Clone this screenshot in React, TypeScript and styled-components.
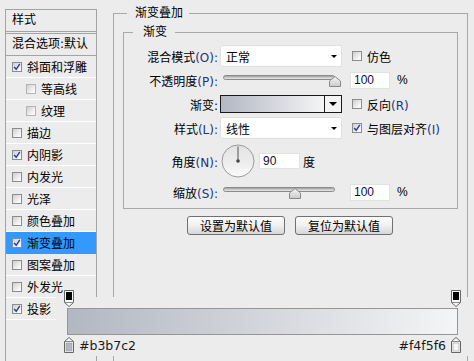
import React from 'react';
import styled, { createGlobalStyle } from 'styled-components';

const GlobalStyle = createGlobalStyle`
  html, body {
    margin: 0;
    padding: 0;
    background: #ececec;
  }
  body {
    font-family: "DejaVu Sans", "Noto Sans CJK SC", sans-serif;
    font-size: 12px;
    color: #000;
  }
`;

const Window = styled.div`
  position: relative;
  width: 474px;
  height: 361px;
  overflow: hidden;
  display: flex;
  align-items: flex-start;
  background: #ececec;
`;

/* ---------- left style list ---------- */

const StyleList = styled.div`
  box-sizing: border-box;
  flex-shrink: 0;
  width: 92px;
  height: 352px;
  margin: 9px 0 0 5px;
  border: 1px solid #a3a3a3;
  border-bottom: none;
`;

const ListHead = styled.div`
  height: 21px;
  line-height: 21px;
  padding-left: 6px;
  border-bottom: 3px double #a3a3a3;
`;

const ListBlend = styled.div`
  height: 21px;
  line-height: 21px;
  padding-left: 6px;
  white-space: nowrap;
  border-bottom: 1px solid #a3a3a3;
`;

const ListItem = styled.div<{ $indent?: boolean; $active?: boolean }>`
  display: flex;
  align-items: center;
  gap: 5px;
  height: 21px;
  padding-left: ${p => (p.$indent ? 20 : 6)}px;
  white-space: nowrap;
  background: ${p => (p.$active ? '#3399ff' : 'transparent')};
  border-bottom: 1px solid ${p => (p.$active ? '#3399ff' : '#fff')};
`;

const Box = styled.span<{ $dim?: boolean }>`
  box-sizing: border-box;
  flex-shrink: 0;
  display: inline-flex;
  width: 10px;
  height: 10px;
  border: 1px solid ${p => (p.$dim ? '#b4b4b4' : '#8c8c8c')};
  background: linear-gradient(135deg, #cfcfcf, #f4f4f4 70%, #fff);
`;

const Check: React.FC<{ on?: boolean; dim?: boolean }> = ({ on, dim }) => (
  <Box $dim={dim}>
    {on && (
      <svg width="8" height="8" viewBox="0 0 8 8">
        <path d="M1.2 4 L3.2 6.3 L6.8 0.8" fill="none" stroke="#2a3ea8" strokeWidth="1.5" />
      </svg>
    )}
  </Box>
);

/* ---------- right settings ---------- */

const Group = styled.fieldset`
  box-sizing: border-box;
  flex-shrink: 0;
  min-width: 0;
  width: 355px;
  height: 420px;
  margin: 6px 0 0 16px;
  padding: 5px 9px 0 9px;
  border: 1px solid #a8a8a8;
`;

const GroupTitle = styled.legend<{ $inset: number; $pad: string }>`
  margin-left: ${p => p.$inset}px;
  padding: ${p => p.$pad};
  font-size: 12px;
  line-height: 14px;
`;

const Inner = styled.fieldset`
  box-sizing: border-box;
  min-width: 0;
  width: 335px;
  margin: 0;
  padding: 5px 0 6px 0;
  border: 1px solid #a8a8a8;
`;

const Row = styled.div<{ $h: number }>`
  display: flex;
  align-items: center;
  height: ${p => p.$h}px;
`;

const Label = styled.div`
  flex-shrink: 0;
  width: 94px;
  text-align: right;
  white-space: nowrap;
`;

const Key = styled.span`
  color: #22337f;
`;

const Control = styled.div`
  flex-shrink: 0;
  display: flex;
  align-items: center;
  width: 122px;
  margin-left: 2px;
`;

const Side = styled.div`
  display: flex;
  align-items: center;
  margin-left: 8px;
  white-space: nowrap;
`;

const CheckLabel = styled.label`
  display: flex;
  align-items: center;
  gap: 5px;
  margin-left: 2px;
`;

const Select = styled.div`
  box-sizing: border-box;
  display: flex;
  align-items: center;
  justify-content: space-between;
  width: 122px;
  height: 22px;
  padding: 0 4px 0 5px;
  background: #fff;
  border: 1px solid #e0e0e0;
  border-radius: 2px;
`;

const Caret = styled.span<{ $w: number }>`
  width: 0;
  height: 0;
  border-left: ${p => p.$w / 2}px solid transparent;
  border-right: ${p => p.$w / 2}px solid transparent;
  border-top: ${p => p.$w / 2}px solid #000;
`;

const Swatch = styled.div`
  box-sizing: border-box;
  display: flex;
  width: 122px;
  height: 18px;
  border: 1px solid #1a1a1a;
`;

const SwatchFill = styled.div`
  flex: 1;
  background: linear-gradient(to right, #b3b7c2, #f4f5f6);
`;

const SwatchDrop = styled.div`
  display: flex;
  align-items: center;
  justify-content: center;
  width: 16px;
  border-left: 1px solid #1a1a1a;
  background: #f4f4f4;
`;

const Slider = styled.div`
  position: relative;
  width: 122px;
  height: 16px;
`;

const Track = styled.div`
  position: absolute;
  left: 3px;
  top: 3px;
  box-sizing: border-box;
  width: 112px;
  height: 5px;
  border-radius: 3px;
  border: 1px solid #8a8a8a;
  background: linear-gradient(#9c9c9c, #d2d2d2 60%, #e6e6e6);
`;

const ThumbWrap = styled.div`
  position: absolute;
  top: 4px;
  width: 12px;
  height: 11px;
`;

const Thumb: React.FC<{ ratio: number }> = ({ ratio }) => (
  <ThumbWrap style={{ left: 3 + ratio * 112 - 6 }}>
    <svg width="12" height="11" viewBox="0 0 12 11">
      <defs>
        <linearGradient id="th" x1="0" y1="0" x2="0" y2="1">
          <stop offset="0" stopColor="#f6f6f6" />
          <stop offset="1" stopColor="#cacaca" />
        </linearGradient>
      </defs>
      <polygon points="6,0.5 11.5,5 11.5,10.5 0.5,10.5 0.5,5" fill="url(#th)" stroke="#8a8a8a" />
    </svg>
  </ThumbWrap>
);

const NumberBox = styled.div<{ $w: number; $h: number }>`
  box-sizing: border-box;
  width: ${p => p.$w}px;
  height: ${p => p.$h}px;
  padding-left: 3px;
  line-height: ${p => p.$h - 2}px;
  background: #fff;
  border: 1px solid #e2e2e2;
  font-family: "Liberation Sans", sans-serif;
  font-size: 12px;
  color: #101030;
`;

const Unit = styled.span<{ $gap: number }>`
  margin-left: ${p => p.$gap}px;
  font-family: "Liberation Sans", "Noto Sans CJK SC", sans-serif;
`;

const DialWrap = styled.div`
  display: flex;
  margin-left: 1px;
`;

const Dial: React.FC = () => (
  <DialWrap>
    <svg width="34" height="34" viewBox="0 0 34 34">
      <defs>
        <linearGradient id="dl" x1="0" y1="0" x2="0" y2="1">
          <stop offset="0" stopColor="#e2e2e2" />
          <stop offset="0.55" stopColor="#ededed" />
          <stop offset="1" stopColor="#fbfbfb" />
        </linearGradient>
      </defs>
      <circle cx="17" cy="17" r="16" fill="url(#dl)" stroke="#9a9a9a" />
      <line x1="17" y1="17" x2="17" y2="2.5" stroke="#555" strokeWidth="1" />
      <circle cx="17" cy="17" r="1.8" fill="#444" />
    </svg>
  </DialWrap>
);

const Buttons = styled.div`
  display: flex;
  gap: 10px;
  margin: 7px 0 0 64px;
`;

const Button = styled.button`
  box-sizing: border-box;
  width: 98px;
  height: 19px;
  padding: 0;
  border: 1px solid #707070;
  border-radius: 3px;
  background: linear-gradient(#fdfdfd, #f0f0f0 50%, #d6d6d6);
  font: 12px/17px "Noto Sans CJK SC", sans-serif;
  color: #000;
`;

/* ---------- gradient strip on top ---------- */

const Editor = styled.div`
  position: absolute;
  left: 56px;
  top: 297px;
  right: 0;
  height: 59px;
  background: #ececec;
`;

const Bar = styled.div`
  box-sizing: border-box;
  width: 391px;
  height: 27px;
  margin: 11px 0 0 11px;
  border: 1px solid #969696;
  background: linear-gradient(to right, #b3b7c2, #f4f5f6);
`;

const StopRow = styled.div`
  display: flex;
  align-items: center;
  justify-content: space-between;
  width: 397px;
  height: 16px;
  margin: 2px 0 0 8px;
`;

const StopSide = styled.div`
  display: flex;
  align-items: center;
  gap: 5px;
`;

const Hex = styled.span`
  font-family: "DejaVu Sans", sans-serif;
  font-size: 12.5px;
  color: #1a1a1a;
`;

const OpacityStop = styled.div<{ $x: number }>`
  position: absolute;
  top: -7px;
  left: ${p => p.$x}px;
  width: 10px;
  height: 17px;
`;

const TopStop: React.FC<{ x: number }> = ({ x }) => (
  <OpacityStop $x={x}>
    <svg width="10" height="17" viewBox="0 0 10 17">
      <polygon points="0.5,0.5 9.5,0.5 9.5,12.5 5,16.5 0.5,12.5" fill="#fafafa" stroke="#666" />
      <line x1="0.5" y1="12.5" x2="9.5" y2="12.5" stroke="#888" />
      <rect x="2" y="2" width="6" height="8" fill="#000" />
    </svg>
  </OpacityStop>
);

const ColorStop: React.FC<{ color: string }> = ({ color }) => (
  <svg width="10" height="16" viewBox="0 0 10 16">
    <polygon points="5,0.5 9.5,4.5 9.5,15.5 0.5,15.5 0.5,4.5" fill="#fafafa" stroke="#666" />
    <line x1="0.5" y1="4.5" x2="9.5" y2="4.5" stroke="#888" />
    <rect x="2" y="6" width="6" height="8" fill={color} stroke="#9a9a9a" strokeWidth="0.6" />
  </svg>
);

const items = [
  { name: '斜面和浮雕', on: true },
  { name: '等高线', indent: true },
  { name: '纹理', indent: true },
  { name: '描边' },
  { name: '内阴影', on: true },
  { name: '内发光' },
  { name: '光泽' },
  { name: '颜色叠加' },
  { name: '渐变叠加', on: true, active: true },
  { name: '图案叠加' },
  { name: '外发光' },
  { name: '投影', on: true },
];

const App: React.FC = () => (
  <Window>
    <GlobalStyle />
    <StyleList>
      <ListHead>样式</ListHead>
      <ListBlend>混合选项:默认</ListBlend>
      {items.map(it => (
        <ListItem key={it.name} $indent={it.indent} $active={it.active}>
          <Check on={it.on} dim={it.indent} />
          {it.name}
        </ListItem>
      ))}
    </StyleList>

    <Group>
      <GroupTitle $inset={4} $pad="0 6px 0 8px">渐变叠加</GroupTitle>
      <Inner>
        <GroupTitle $inset={9} $pad="0 8px 0 10px">渐变</GroupTitle>
        <Row $h={24}>
          <Label>混合模式<Key>(O):</Key></Label>
          <Control>
            <Select>正常<Caret $w={7} /></Select>
          </Control>
          <Side>
            <CheckLabel><Check /><span>仿色</span></CheckLabel>
          </Side>
        </Row>
        <Row $h={24}>
          <Label>不透明度<Key>(P):</Key></Label>
          <Control>
            <Slider>
              <Track />
              <Thumb ratio={1} />
            </Slider>
          </Control>
          <Side>
            <NumberBox $w={40} $h={17}>100</NumberBox>
            <Unit $gap={7}>%</Unit>
          </Side>
        </Row>
        <Row $h={24}>
          <Label>渐变:</Label>
          <Control>
            <Swatch>
              <SwatchFill />
              <SwatchDrop><Caret $w={8} /></SwatchDrop>
            </Swatch>
          </Control>
          <Side>
            <CheckLabel><Check /><span>反向<Key>(R)</Key></span></CheckLabel>
          </Side>
        </Row>
        <Row $h={24}>
          <Label>样式<Key>(L):</Key></Label>
          <Control>
            <Select>线性<Caret $w={7} /></Select>
          </Control>
          <Side>
            <CheckLabel><Check on /><span>与图层对齐<Key>(I)</Key></span></CheckLabel>
          </Side>
        </Row>
        <Row $h={42}>
          <Label>角度<Key>(N):</Key></Label>
          <Control>
            <Dial />
            <NumberBox $w={41} $h={16} style={{ marginLeft: 4 }}>90</NumberBox>
            <Unit $gap={3}>度</Unit>
          </Control>
        </Row>
        <Row $h={20}>
          <Label>缩放<Key>(S):</Key></Label>
          <Control>
            <Slider>
              <Track />
              <Thumb ratio={(100 - 10) / 140} />
            </Slider>
          </Control>
          <Side>
            <NumberBox $w={40} $h={17}>100</NumberBox>
            <Unit $gap={7}>%</Unit>
          </Side>
        </Row>
      </Inner>
      <Buttons>
        <Button>设置为默认值</Button>
        <Button>复位为默认值</Button>
      </Buttons>
    </Group>

    <Editor>
      <TopStop x={8} />
      <TopStop x={395} />
      <Bar />
      <StopRow>
        <StopSide>
          <ColorStop color="#b3b7c2" />
          <Hex>#b3b7c2</Hex>
        </StopSide>
        <StopSide>
          <Hex>#f4f5f6</Hex>
          <ColorStop color="#f4f5f6" />
        </StopSide>
      </StopRow>
    </Editor>
  </Window>
);

export default App;
